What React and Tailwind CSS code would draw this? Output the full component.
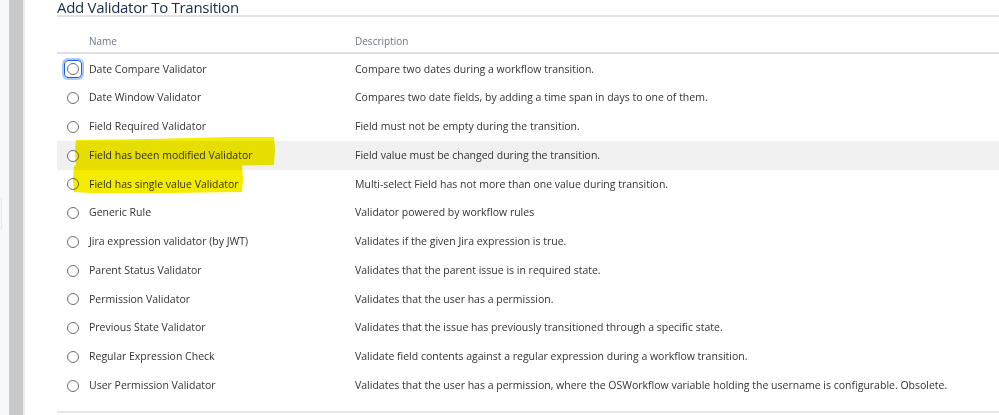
import React from "react";

const rows = [
  ["Date Compare Validator", "Compare two dates during a workflow transition."],
  ["Date Window Validator", "Compares two date fields, by adding a time span in days to one of them."],
  ["Field Required Validator", "Field must not be empty during the transition."],
  ["Field has been modified Validator", "Field value must be changed during the transition."],
  ["Field has single value Validator", "Multi-select Field has not more than one value during transition."],
  ["Generic Rule", "Validator powered by workflow rules"],
  ["Jira expression validator (by JWT)", "Validates if the given Jira expression is true."],
  ["Parent Status Validator", "Validates that the parent issue is in required state."],
  ["Permission Validator", "Validates that the user has a permission."],
  ["Previous State Validator", "Validates that the issue has previously transitioned through a specific state."],
  ["Regular Expression Check", "Validate field contents against a regular expression during a workflow transition."],
  ["User Permission Validator", "Validates that the user has a permission, where the OSWorkflow variable holding the username is configurable. Obsolete."],
];

function Radio({ focused }) {
  if (focused) {
    return (
      <span className="flex h-[18px] w-[18px] items-center justify-center rounded-[4px] border-[1.5px] border-[#1d5fd6] shadow-[0_0_0_2px_#a9cbff]">
        <span className="h-[12px] w-[12px] rounded-full border-[1.5px] border-[#6b6b74] bg-white" />
      </span>
    );
  }
  return <span className="h-[12px] w-[12px] rounded-full border-[1.5px] border-[#6b6b74] bg-white" />;
}

export default function App() {
  return (
    <div
      className="relative flex h-[415px] w-[999px] overflow-hidden bg-white text-[#333]"
      style={{ fontFamily: '"Open Sans", "Noto Sans", Arial, sans-serif' }}
    >
      <div className="relative w-[9px] shrink-0 bg-[#f7f8fa]">
        <div className="absolute left-[-3px] top-[197px] h-[33px] w-[5px] rounded-[2px] border border-[#e6e7ea] bg-[#f4f5f7]" />
      </div>
      <div className="w-[14px] shrink-0 bg-[#c9c9c9]" />
      <div className="w-[2px] shrink-0 bg-[#ececec]" />
      <div className="w-[32px] shrink-0" />
      <div className="flex-1">
        <div className="h-[17px] border-b-2 border-[#e2e3e8]">
          <div className="text-[15px] leading-[15px] tracking-[-0.3px] text-[#172b4d]">Add Validator To Transition</div>
        </div>
        <div className="flex h-[37px] items-end border-b-2 border-[#dfe0e6] pb-[3px] text-[10px] text-[#6b778c]">
          <div className="w-[32px]" />
          <div className="w-[266px]">Name</div>
          <div>Description</div>
        </div>
        <div className="pt-[1px]">
          {rows.map(([name, desc], i) => (
            <div
              key={name}
              className={`flex h-[28.75px] items-center text-[10.5px] ${i === 3 ? "bg-[#f0f0f0]" : ""}`}
            >
              <div className="flex w-[32px] items-center justify-center pr-[1px]">
                <Radio focused={i === 0} />
              </div>
              <div className="w-[266px] whitespace-nowrap">{name}</div>
              <div className="whitespace-nowrap">{desc}</div>
            </div>
          ))}
        </div>
        <div className="mt-[11px] border-t-2 border-[#e6e7ea]" />
      </div>
      <svg
        className="pointer-events-none absolute left-0 top-0 mix-blend-multiply"
        width="999"
        height="415"
        viewBox="0 0 999 415"
      >
        <path d="M76 140 L150 139 L230 137 L274 137 L275 150 L274 165 L200 166 L120 167 L76 167 L75 153 Z" fill="#f4ec00" />
        <path d="M74 166 L150 165 L242 165 L243 179 L242 192 L170 193 L90 193 L74 192 L73 179 Z" fill="#f4ec00" />
      </svg>
    </div>
  );
}
